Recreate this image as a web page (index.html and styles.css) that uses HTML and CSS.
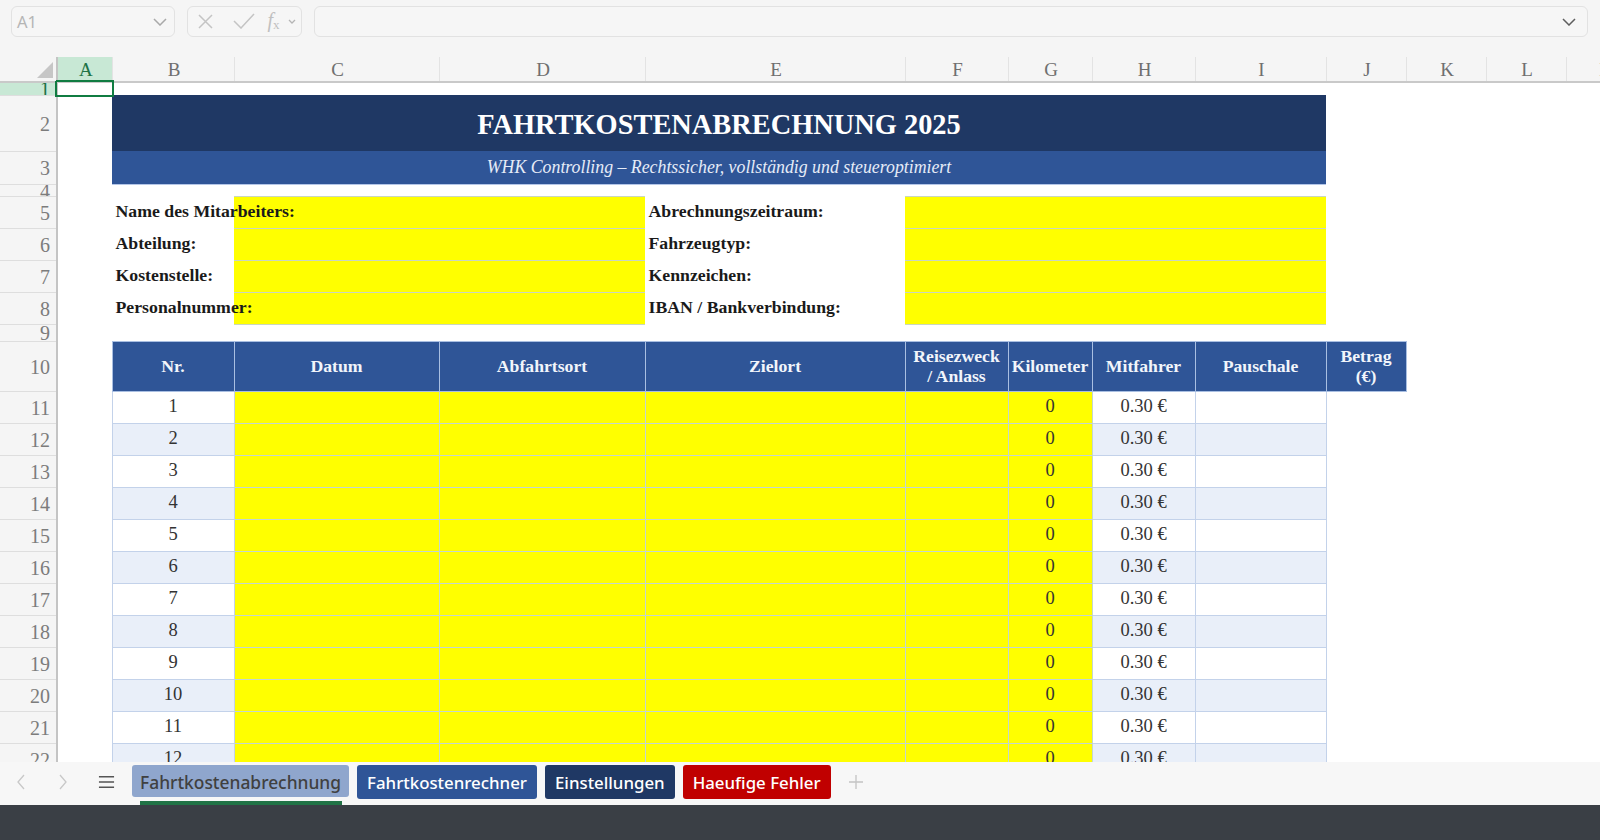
FILE: index.html
```html
<!DOCTYPE html>
<html lang="de">
<head>
<meta charset="utf-8">
<title>Fahrtkostenabrechnung 2025</title>
<link rel="stylesheet" href="styles.css">
</head>
<body>
<div class="formula-bar">
  <div class="box name-box"><span>A1</span>
    <svg class="chev" viewBox="0 0 14 8"><path d="M1 1l6 6 6-6"/></svg>
  </div>
  <div class="box fx-box">
    <svg class="ico" viewBox="0 0 15 15"><path d="M1 1l13 13M14 1L1 14"/></svg>
    <svg class="ico check" viewBox="0 0 22 16"><path d="M1 8l7 7L21 1"/></svg>
    <span class="fx">f<sub>x</sub></span>
    <svg class="mini" viewBox="0 0 8 5"><path d="M1 1l3 3 3-3"/></svg>
  </div>
  <div class="box formula-input">
    <svg class="chev dark" viewBox="0 0 14 8"><path d="M1 1l6 6 6-6"/></svg>
  </div>
</div>
<div class="sheet">
<table>
<colgroup>
  <col class="c-rh"><col class="c-a"><col class="c-b"><col class="c-c"><col class="c-d"><col class="c-e"><col class="c-f"><col class="c-g"><col class="c-h"><col class="c-i"><col class="c-j"><col class="c-k"><col class="c-l"><col class="c-m">
</colgroup>
<thead>
<tr class="col-heads">
  <th class="corner"><svg viewBox="0 0 16 16"><path d="M16 0v16H0z"/></svg></th>
  <th class="on">A</th><th>B</th><th>C</th><th>D</th><th>E</th><th>F</th><th>G</th><th>H</th><th>I</th><th>J</th><th>K</th><th>L</th><th>M</th>
</tr>
</thead>
<tbody>
<tr class="r1"><th class="rh on">1</th><td class="sel"></td><td colspan="12"></td></tr>
<tr class="r2"><th class="rh">2</th><td></td><td colspan="8" class="title">FAHRTKOSTENABRECHNUNG 2025</td><td colspan="4"></td></tr>
<tr class="r3"><th class="rh">3</th><td></td><td colspan="8" class="subtitle">WHK Controlling – Rechtssicher, vollständig und steueroptimiert</td><td colspan="4"></td></tr>
<tr class="r4"><th class="rh">4</th><td colspan="13"></td></tr>
<tr class="info"><th class="rh">5</th><td></td><td class="label"><span>Name des Mitarbeiters:</span></td><td colspan="2" class="input"></td><td class="label"><span>Abrechnungszeitraum:</span></td><td colspan="4" class="input"></td><td colspan="4"></td></tr>
<tr class="info"><th class="rh">6</th><td></td><td class="label"><span>Abteilung:</span></td><td colspan="2" class="input"></td><td class="label"><span>Fahrzeugtyp:</span></td><td colspan="4" class="input"></td><td colspan="4"></td></tr>
<tr class="info"><th class="rh">7</th><td></td><td class="label"><span>Kostenstelle:</span></td><td colspan="2" class="input"></td><td class="label"><span>Kennzeichen:</span></td><td colspan="4" class="input"></td><td colspan="4"></td></tr>
<tr class="info"><th class="rh">8</th><td></td><td class="label"><span>Personalnummer:</span></td><td colspan="2" class="input"></td><td class="label"><span>IBAN / Bankverbindung:</span></td><td colspan="4" class="input"></td><td colspan="4"></td></tr>
<tr class="r9"><th class="rh">9</th><td colspan="13"></td></tr>
<tr class="head"><th class="rh">10</th><td></td><td class="hc">Nr.</td><td class="hc">Datum</td><td class="hc">Abfahrtsort</td><td class="hc">Zielort</td><td class="hc">Reisezweck<br>/ Anlass</td><td class="hc">Kilometer</td><td class="hc">Mitfahrer</td><td class="hc">Pauschale</td><td class="hc">Betrag<br>(€)</td><td colspan="3"></td></tr>
<tr class="data"><th class="rh">11</th><td></td><td class="v">1</td><td class="y"></td><td class="y"></td><td class="y"></td><td class="y"></td><td class="y v">0</td><td class="v">0.30 €</td><td class="v"></td><td colspan="4"></td></tr>
<tr class="data alt"><th class="rh">12</th><td></td><td class="v">2</td><td class="y"></td><td class="y"></td><td class="y"></td><td class="y"></td><td class="y v">0</td><td class="v">0.30 €</td><td class="v"></td><td colspan="4"></td></tr>
<tr class="data"><th class="rh">13</th><td></td><td class="v">3</td><td class="y"></td><td class="y"></td><td class="y"></td><td class="y"></td><td class="y v">0</td><td class="v">0.30 €</td><td class="v"></td><td colspan="4"></td></tr>
<tr class="data alt"><th class="rh">14</th><td></td><td class="v">4</td><td class="y"></td><td class="y"></td><td class="y"></td><td class="y"></td><td class="y v">0</td><td class="v">0.30 €</td><td class="v"></td><td colspan="4"></td></tr>
<tr class="data"><th class="rh">15</th><td></td><td class="v">5</td><td class="y"></td><td class="y"></td><td class="y"></td><td class="y"></td><td class="y v">0</td><td class="v">0.30 €</td><td class="v"></td><td colspan="4"></td></tr>
<tr class="data alt"><th class="rh">16</th><td></td><td class="v">6</td><td class="y"></td><td class="y"></td><td class="y"></td><td class="y"></td><td class="y v">0</td><td class="v">0.30 €</td><td class="v"></td><td colspan="4"></td></tr>
<tr class="data"><th class="rh">17</th><td></td><td class="v">7</td><td class="y"></td><td class="y"></td><td class="y"></td><td class="y"></td><td class="y v">0</td><td class="v">0.30 €</td><td class="v"></td><td colspan="4"></td></tr>
<tr class="data alt"><th class="rh">18</th><td></td><td class="v">8</td><td class="y"></td><td class="y"></td><td class="y"></td><td class="y"></td><td class="y v">0</td><td class="v">0.30 €</td><td class="v"></td><td colspan="4"></td></tr>
<tr class="data"><th class="rh">19</th><td></td><td class="v">9</td><td class="y"></td><td class="y"></td><td class="y"></td><td class="y"></td><td class="y v">0</td><td class="v">0.30 €</td><td class="v"></td><td colspan="4"></td></tr>
<tr class="data alt"><th class="rh">20</th><td></td><td class="v">10</td><td class="y"></td><td class="y"></td><td class="y"></td><td class="y"></td><td class="y v">0</td><td class="v">0.30 €</td><td class="v"></td><td colspan="4"></td></tr>
<tr class="data"><th class="rh">21</th><td></td><td class="v">11</td><td class="y"></td><td class="y"></td><td class="y"></td><td class="y"></td><td class="y v">0</td><td class="v">0.30 €</td><td class="v"></td><td colspan="4"></td></tr>
<tr class="data alt"><th class="rh">22</th><td></td><td class="v">12</td><td class="y"></td><td class="y"></td><td class="y"></td><td class="y"></td><td class="y v">0</td><td class="v">0.30 €</td><td class="v"></td><td colspan="4"></td></tr>
</tbody>
</table>
</div>
<div class="tabbar">
  <svg class="nav" viewBox="0 0 8 16"><path d="M7 1L1 8l6 7"/></svg>
  <svg class="nav" viewBox="0 0 8 16"><path d="M1 1l6 7-6 7"/></svg>
  <svg class="menu" viewBox="0 0 18 14"><path d="M1 1.500h16M1 7h16M1 12.500h16"/></svg>
  <div class="tab active">Fahrtkostenabrechnung</div>
  <div class="tab blue">Fahrtkostenrechner</div>
  <div class="tab navy">Einstellungen</div>
  <div class="tab red">Haeufige Fehler</div>
  <svg class="plus" viewBox="0 0 16 16"><path d="M8 1v14M1 8h14"/></svg>
</div>
<div class="dock"></div>
</body>
</html>
```
FILE: styles.css
```css
* { box-sizing: border-box; }
html, body { margin: 0; height: 100%; }
body {
  width: 1600px; height: 840px; overflow: hidden;
  display: flex; flex-direction: column;
  background: #f5f5f5;
  font-family: "Liberation Serif", "Times New Roman", serif;
}

/* formula bar */
.formula-bar {
  flex: 0 0 57px; display: flex; align-items: flex-start;
  gap: 12px; padding: 6px 12px 0 11px;
  background: #f5f5f5;
}
.box {
  height: 31px; border: 1.5px solid #e2e2e2; border-radius: 6px;
  background: #f6f6f6; display: flex; align-items: center;
}
.name-box { width: 164px; padding: 0 4px 0 5px; justify-content: space-between;
  font: 16.500px "Noto Sans", sans-serif; color: #b5b5b5; }
.fx-box { width: 115px; padding: 0 5px 0 9.500px; }
.formula-input { flex: 1; justify-content: flex-end; padding-right: 11px; }
.chev { width: 14px; height: 8px; margin-right: 3px; fill: none; stroke: #a9a9a9; stroke-width: 1.5; }
.chev.dark { stroke: #5e5e5e; margin-right: 0; }
.ico { height: 15px; width: 15px; fill: none; stroke: #c4c4c4; stroke-width: 1.5; margin-right: 20px; flex: none; }
.ico.check { width: 22px; height: 16px; margin-right: 13px; margin-top: -2px; }
.fx { font: italic 20px "Liberation Serif", serif; color: #c0c0c0; line-height: 1; margin: -4px 7px 0 0; width: 15px; white-space: nowrap; }
.fx sub { font-size: 13px; font-style: normal; vertical-align: -2px; line-height: 0; }
.mini { width: 8px; height: 5px; fill: none; stroke: #b5b5b5; stroke-width: 1.3; flex: none; }

/* sheet */
.sheet { flex: 1 1 auto; overflow: hidden; background: #fff; min-height: 0; }
table { border-collapse: collapse; table-layout: fixed; width: 1647px; }
.c-rh { width: 57px; } .c-a { width: 55px; } .c-b { width: 122px; } .c-c { width: 205px; }
.c-d { width: 206px; } .c-e { width: 260px; } .c-f { width: 103px; } .c-g { width: 84px; }
.c-h { width: 103px; } .c-i { width: 131px; } .c-j { width: 80px; } .c-k { width: 80px; }
.c-l { width: 80px; } .c-m { width: 81px; }
td, th { padding: 0; }

.col-heads { height: 25px; }
.col-heads th {
  background: #f5f5f5; color: #6f6f6f; font-size: 19px; font-weight: normal; line-height: 20px;
  padding: 1px 0 0 2px;
  border-bottom: 2px solid #c9c9c9; border-left: 1px solid #e3e3e3;
}
.col-heads th.on { background: #c8e8d5; color: #217346; border-left: 0; }
.col-heads th.corner {
  position: relative; background: #f5f5f5; border-left: 0;
  border-right: 2px solid #c4c4c4; text-align: right; padding: 0;
}
.corner::before {
  content: ""; position: absolute; right: -2px; top: -14px; width: 2px; height: 14px; background: #c4c4c4;
}
.corner svg { display: block; width: 16px; height: 16px; margin: 4px 3px 3px auto; fill: #c6c6c6; }

.rh {
  background: #f5f5f5; color: #7c7c7c; font-size: 20px; font-weight: normal;
  line-height: 9px; text-align: right; padding: 2px 6px 0 0; overflow: hidden;
  border-right: 2px solid #c4c4c4; border-bottom: 1px solid #dedede;
}
.rh.on { background: #c8e8d5; color: #217346; }

.r1 { height: 13px; } .r2 { height: 56px; } .r3 { height: 33px; } .r4 { height: 12px; }
.info { height: 32px; } .r9 { height: 17px; } .head { height: 50px; } .data { height: 32px; }
.sel { outline: 2px solid #107c41; outline-offset: 0; }

.title {
  background: #1f3864; color: #fff; text-align: center; font-weight: bold; font-size: 28.400px; line-height: 30px;
  padding-top: 4px;
}
.subtitle {
  background: #2f5597; color: #e6ecf7; text-align: center; font-style: italic; font-size: 17.800px; line-height: 20px;
  border-bottom: 1px solid #b4c6e7;
}
.label { font-weight: bold; font-size: 17.750px; color: #1a1a1a; line-height: 20px; padding: 0 0 3px 3.500px; position: relative; }
.label span { position: relative; z-index: 1; white-space: nowrap; display: block; width: 0; }
.input { background: #ff0; border-top: 1px solid #c9d6c0; border-bottom: 1px solid #c9d6c0; }
.hc {
  background: #2f5597; color: #f2f5fb; text-align: center; font-weight: bold; font-size: 17.700px; line-height: 20px;
  border: 1px solid #a9bfe2;
}
.v { text-align: center; font-size: 18.500px; color: #333; line-height: 20px; padding-bottom: 2px; border: 1px solid #c3d2ea; background: #fff; }
.alt .v { background: #e9eff9; }
.data .y, .alt .y { background: #ff0; border: 1px solid #c3d6d0; }

/* tabs */
.tabbar {
  flex: 0 0 43px; display: flex; align-items: flex-start; gap: 8px;
  padding: 3px 0 0 0; background: #f7f7f7; position: relative;
}
.nav { width: 8px; height: 16px; margin: 9px 0 0 17px; fill: none; stroke: #c8c8c8; stroke-width: 1.3; flex: none; }
.nav + .nav { margin-left: 26px; }
.menu { width: 17px; height: 14px; margin: 10px 9px 0 23px; fill: none; stroke: #555; stroke-width: 1.6; flex: none; }
.tab {
  height: 34px; padding: 1px 10px 0; border-radius: 3px; display: flex; align-items: center;
  font: 500 16.850px "Noto Sans", sans-serif; color: #fff; white-space: nowrap;
}
.tab.active { background: #8fa6cd; color: #404040; height: 32px; padding: 1px 8px 0; font-size: 17.400px; position: relative; }
.tab.active::after {
  content: ""; position: absolute; left: 8px; right: 7px; bottom: -8px; height: 4px; background: #217346;
}
.tab.blue { background: #2f5597; }
.tab.navy { background: #1f3864; }
.tab.red { background: #c00000; }
.plus { width: 16px; height: 16px; margin: 9px 0 0 9px; fill: none; stroke: #c4c4c4; stroke-width: 1.3; }
.dock { flex: 0 0 35px; background: #3a3f45; }
```
